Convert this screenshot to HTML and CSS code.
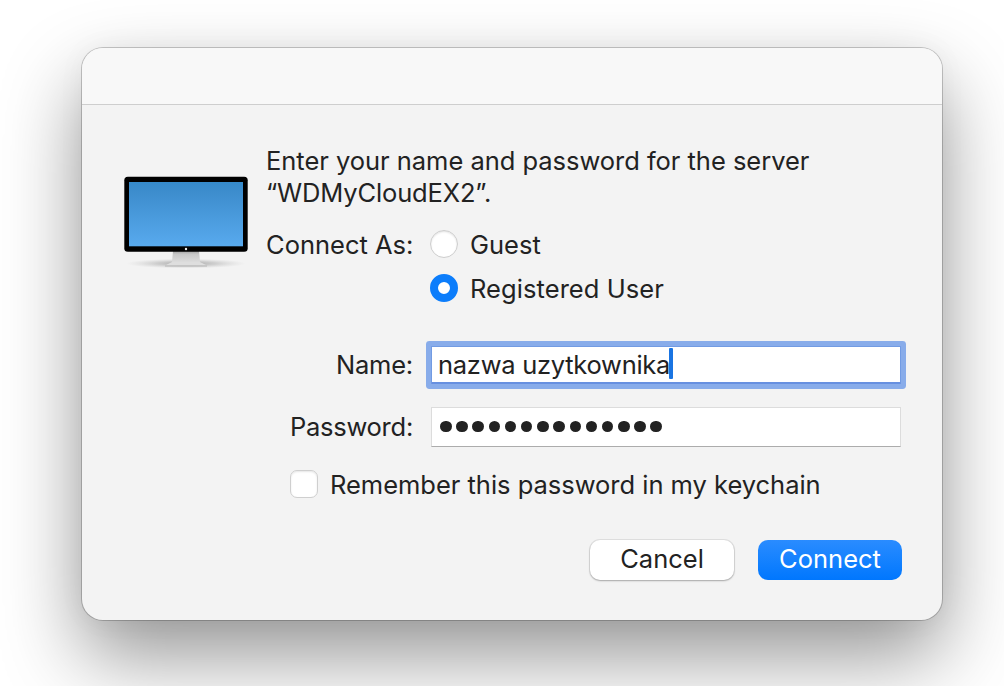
FILE: index.html
```html
<!DOCTYPE html>
<html lang="en">
<head>
    <meta charset="UTF-8">
    <meta name="viewport" content="width=device-width, initial-scale=1.0">
    <title>Connect to server</title>
    <link rel="stylesheet" href="styles.css">
</head>
<body>

    <div class="dialog">
        <div class="titlebar"></div>

        <div class="content">
            <svg class="monitor" width="126" height="94" viewBox="0 0 126 94">
                <defs>
                    <linearGradient id="screen" x1="0" y1="0" x2="0" y2="1">
                        <stop offset="0" stop-color="#358acb"/>
                        <stop offset="0.15" stop-color="#3d8dcd"/>
                        <stop offset="1" stop-color="#58aaee"/>
                    </linearGradient>
                    <linearGradient id="stand" x1="0" y1="0" x2="0" y2="1">
                        <stop offset="0" stop-color="#a2a2a2"/>
                        <stop offset="0.3" stop-color="#c8c8c8"/>
                        <stop offset="1" stop-color="#dcdcdc"/>
                    </linearGradient>
                    <radialGradient id="ground">
                        <stop offset="0" stop-color="#888888" stop-opacity="0.75"/>
                        <stop offset="0.5" stop-color="#999999" stop-opacity="0.4"/>
                        <stop offset="1" stop-color="#bbbbbb" stop-opacity="0"/>
                    </radialGradient>
                </defs>
                <ellipse cx="62" cy="87.5" rx="60" ry="5" fill="url(#ground)"/>
                <path d="M49 75H75L76 86H48Z" fill="url(#stand)"/>
                <path d="M48 86H76L83 89.5H41Z" fill="#dedede"/>
                <path d="M41 89.5H83V90.5H41Z" fill="#b5b5b5"/>
                <rect x="0.3" y="0.7" width="123.4" height="75" rx="3.5" fill="#000000"/>
                <rect x="5" y="6" width="114" height="64.3" fill="url(#screen)"/>
                <circle cx="62" cy="73" r="1.2" fill="#eeeeee"/>
            </svg>

            <div class="form">
                <div class="message">
                    <div class="line1">Enter your name and password for the server</div>
                    <div class="line2">“WDMyCloudEX2”.</div>
                </div>

                <div class="row option">
                    <div class="label">Connect As:</div>
                    <div class="radio"></div>
                    <div class="guest">Guest</div>
                </div>
                <div class="row option">
                    <div class="label"></div>
                    <div class="radio selected"></div>
                    <div class="registered">Registered User</div>
                </div>

                <div class="row name">
                    <div class="label name-label">Name:</div>
                    <div class="field focused"><span class="value">nazwa uzytkownika</span><span class="caret"></span></div>
                </div>
                <div class="row password">
                    <div class="label password-label">Password:</div>
                    <div class="field dots">
                        <i></i><i></i><i></i><i></i><i></i><i></i><i></i>
                        <i></i><i></i><i></i><i></i><i></i><i></i><i></i>
                    </div>
                </div>

                <div class="row remember">
                    <div class="checkbox"></div>
                    <div class="remember-text">Remember this password in my keychain</div>
                </div>

                <div class="buttons">
                    <button class="cancel">Cancel</button>
                    <button class="connect">Connect</button>
                </div>
            </div>
        </div>
    </div>

</body>
</html>
```

FILE: styles.css
```css
body {
    margin: 0;
    padding: 48px 0 0 82px;
    height: 638px;
    overflow: hidden;
    background: white;
    font-family: Inter, "Liberation Sans", sans-serif;
    font-size: 25.5px;
    line-height: 32px;
    color: #222222;
    white-space: nowrap;
}

.dialog {
    width: 860px;
    height: 572px;
    border-radius: 21px;
    background: #f3f3f3;
    overflow: hidden;
    box-shadow: 0 0 0 1px rgba(0, 0, 0, 0.2), 0 36px 80px rgba(0, 0, 0, 0.42), 0 0 30px rgba(0, 0, 0, 0.04);
}

.titlebar {
    box-sizing: border-box;
    height: 57px;
    background: #f8f8f8;
    border-bottom: 1px solid #cecece;
}

.content {
    display: flex;
    gap: 16px;
    padding: 40px 40px 0 42px;
}

.monitor {
    margin-top: 31px;
    flex-shrink: 0;
}

.form {
    width: 636px;
}

.message {
    margin-bottom: 14px;
}

.line1 {
    letter-spacing: -0.03px;
}

.line2 {
    letter-spacing: -0.15px;
}

.row {
    display: flex;
    align-items: center;
}

.option {
    height: 44px;
}

.label {
    width: 147px;
    margin-right: 17px;
    text-align: right;
    flex-shrink: 0;
}

.name-label {
    letter-spacing: -0.2px;
}

.password-label {
    letter-spacing: -0.25px;
}

.radio {
    box-sizing: border-box;
    width: 28px;
    height: 28px;
    margin: 0 12px 2px 0;
    border: 1px solid #cdcdcd;
    border-radius: 50%;
    background: white;
    box-shadow: inset 0 1px 2px rgba(0, 0, 0, 0.12);
}

.radio.selected {
    border: 8px solid #0c7dfb;
    box-shadow: none;
}

.registered {
    letter-spacing: 0.07px;
}

.field {
    box-sizing: border-box;
    display: flex;
    align-items: center;
    width: 471px;
    height: 40px;
    background: white;
}

.name {
    margin-top: 34px;
}

.focused {
    height: 38px;
    margin: 1px 0 1px 1px;
    width: 470px;
    padding-left: 6px;
    border: 1px solid #729be3;
    border-bottom: 2px solid #6790e0;
    box-shadow: 0 0 0 5px #88acea;
    border-radius: 1px;
}

.value {
    letter-spacing: -0.27px;
}

.caret {
    width: 4px;
    height: 31px;
    margin: 0 0 2px -1px;
    border-radius: 1px;
    background: #1974e2;
}

.password {
    margin-top: 22px;
}

.dots {
    gap: 4.7px;
    width: 470px;
    margin-left: 1px;
    padding: 0 0 1px 8px;
    border: 1px solid #dcdcdc;
    border-bottom-color: #acacac;
}

.dots i {
    width: 11.5px;
    height: 11.5px;
    border-radius: 50%;
    background: #222222;
}

.remember {
    margin: 22px 0 0 24px;
}

.remember-text {
    letter-spacing: -0.02px;
}

.checkbox {
    box-sizing: border-box;
    width: 28px;
    height: 28px;
    margin: 0 12px 2px 0;
    border: 1px solid #cfcfcf;
    border-radius: 7px;
    background: white;
    box-shadow: inset 0 1px 2px rgba(0, 0, 0, 0.1);
}

.buttons {
    display: flex;
    justify-content: flex-end;
    gap: 24px;
    margin-top: 39px;
}

button {
    width: 144px;
    height: 40px;
    padding: 0 0 2px;
    border: none;
    border-radius: 10px;
    font: inherit;
    color: inherit;
}

.cancel {
    background: white;
    box-shadow: 0 0 0 1px rgba(0, 0, 0, 0.08), 0 1px 2px rgba(0, 0, 0, 0.25);
}

.connect {
    background: linear-gradient(#2a8cff, #0077fe);
    color: white;
}
```
